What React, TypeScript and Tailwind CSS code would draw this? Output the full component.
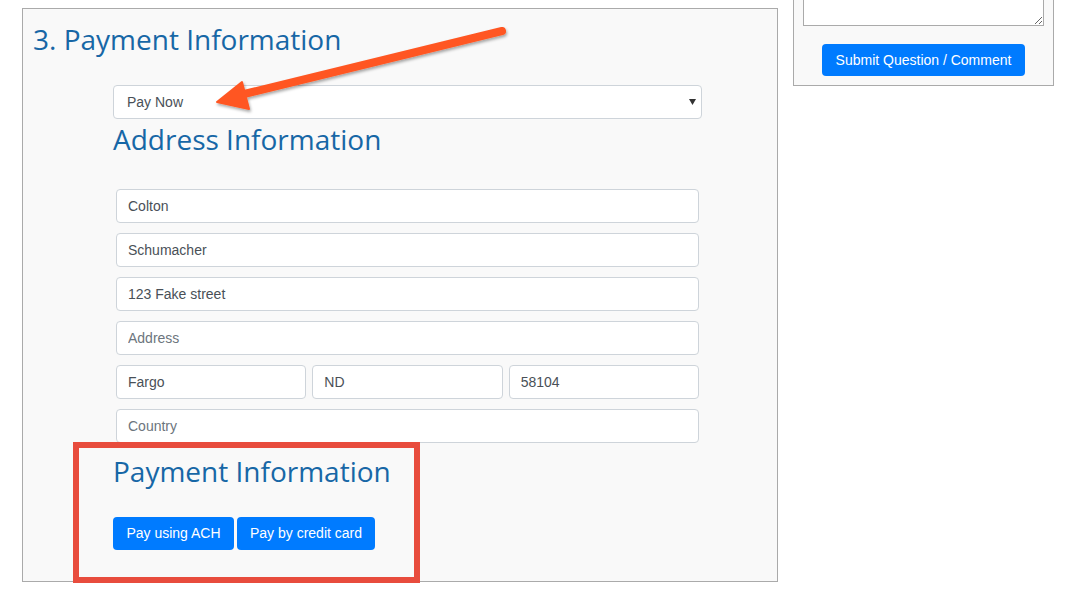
import React from "react";

const inputCls =
  "block h-[34px] w-full rounded-[4px] border border-[#ced4da] bg-white px-[11px] text-[14px] text-[#495057] placeholder:text-[#6c757d] outline-none";

export default function App() {
  return (
    <div className="relative min-h-[591px] w-[1079px] overflow-hidden bg-white font-['Liberation_Sans',Arial,sans-serif]">
      <div className="flex items-start gap-[15px] pl-[22px] pt-[8px]">
        {/* Left panel */}
        <div className="h-[574px] w-[756px] border border-[#aaaaaa] bg-[#f9f9f9] pl-[10px]">
          <h2 className="mt-[12px] font-['Open_Sans',sans-serif] text-[28px] leading-[36px] text-[#1767a6]">
            3. Payment Information
          </h2>
          <div className="ml-[80px] mt-[28px] w-[589px]">
            <div className="relative">
              <select
                className="block h-[34px] w-full appearance-none rounded-[4px] border border-[#ced4da] bg-white pl-[13px] text-[14px] text-[#495057] outline-none"
                defaultValue="now"
              >
                <option value="now">Pay Now</option>
              </select>
              <svg
                className="pointer-events-none absolute right-[6px] top-[14px]"
                width="7"
                height="6"
                viewBox="0 0 7 6"
              >
                <path d="M0 0 L7 0 L3.5 6 Z" fill="#333" />
              </svg>
            </div>
            <h3 className="mt-[2px] font-['Open_Sans',sans-serif] text-[28px] leading-[36px] text-[#1767a6]">
              Address Information
            </h3>
            <div className="ml-[3px] mt-[32px] flex w-[583px] flex-col gap-[10px]">
              <input className={inputCls} defaultValue="Colton" />
              <input className={inputCls} defaultValue="Schumacher" />
              <input className={inputCls} defaultValue="123 Fake street" />
              <input className={inputCls} placeholder="Address" />
              <div className="grid grid-cols-3 gap-[6px]">
                <input className={inputCls} defaultValue="Fargo" />
                <input className={inputCls} defaultValue="ND" />
                <input className={inputCls} defaultValue="58104" />
              </div>
              <input className={inputCls} placeholder="Country" />
            </div>
            <h3 className="mt-[10px] font-['Open_Sans',sans-serif] text-[28px] leading-[36px] text-[#1767a6]">
              Payment Information
            </h3>
            <div className="mt-[28px] flex gap-[3px]">
              <button className="h-[33px] w-[121px] rounded-[4px] bg-[#007bff] text-[14px] text-white">
                Pay using ACH
              </button>
              <button className="h-[33px] w-[138px] rounded-[4px] bg-[#007bff] text-[14px] text-white">
                Pay by credit card
              </button>
            </div>
          </div>
        </div>

        {/* Right panel */}
        <div className="-mt-[60px] flex h-[138px] w-[261px] flex-col items-center border border-[#aaaaaa] bg-[#f9f9f9] px-[9px]">
          <textarea className="mt-[8px] h-[69px] w-[241px] resize-y border border-[#aaaaaa] bg-white outline-none" />
          <button className="mt-[18px] h-[32px] w-[203px] rounded-[4px] bg-[#007bff] text-[14px] text-white">
            Submit Question / Comment
          </button>
        </div>
      </div>

      {/* Red highlight box annotation */}
      <div className="pointer-events-none absolute left-[73px] top-[442px] h-[141px] w-[347px] border-[6px] border-[#e84c3d]" />

      {/* Orange arrow annotation */}
      <svg
        className="pointer-events-none absolute left-0 top-0"
        width="1079"
        height="591"
        viewBox="0 0 1079 591"
      >
        <defs>
          <filter id="sh" x="-10%" y="-10%" width="120%" height="130%">
            <feDropShadow dx="1" dy="2" stdDeviation="1.5" floodColor="#000" floodOpacity="0.35" />
          </filter>
        </defs>
        <g filter="url(#sh)" fill="#ff5722" stroke="#ff5722">
          <line x1="502" y1="31" x2="240" y2="95" strokeWidth="8" strokeLinecap="round" />
          <path d="M217 102 L242 82 L249 109 Z" strokeWidth="2" strokeLinejoin="round" />
        </g>
      </svg>
    </div>
  );
}
